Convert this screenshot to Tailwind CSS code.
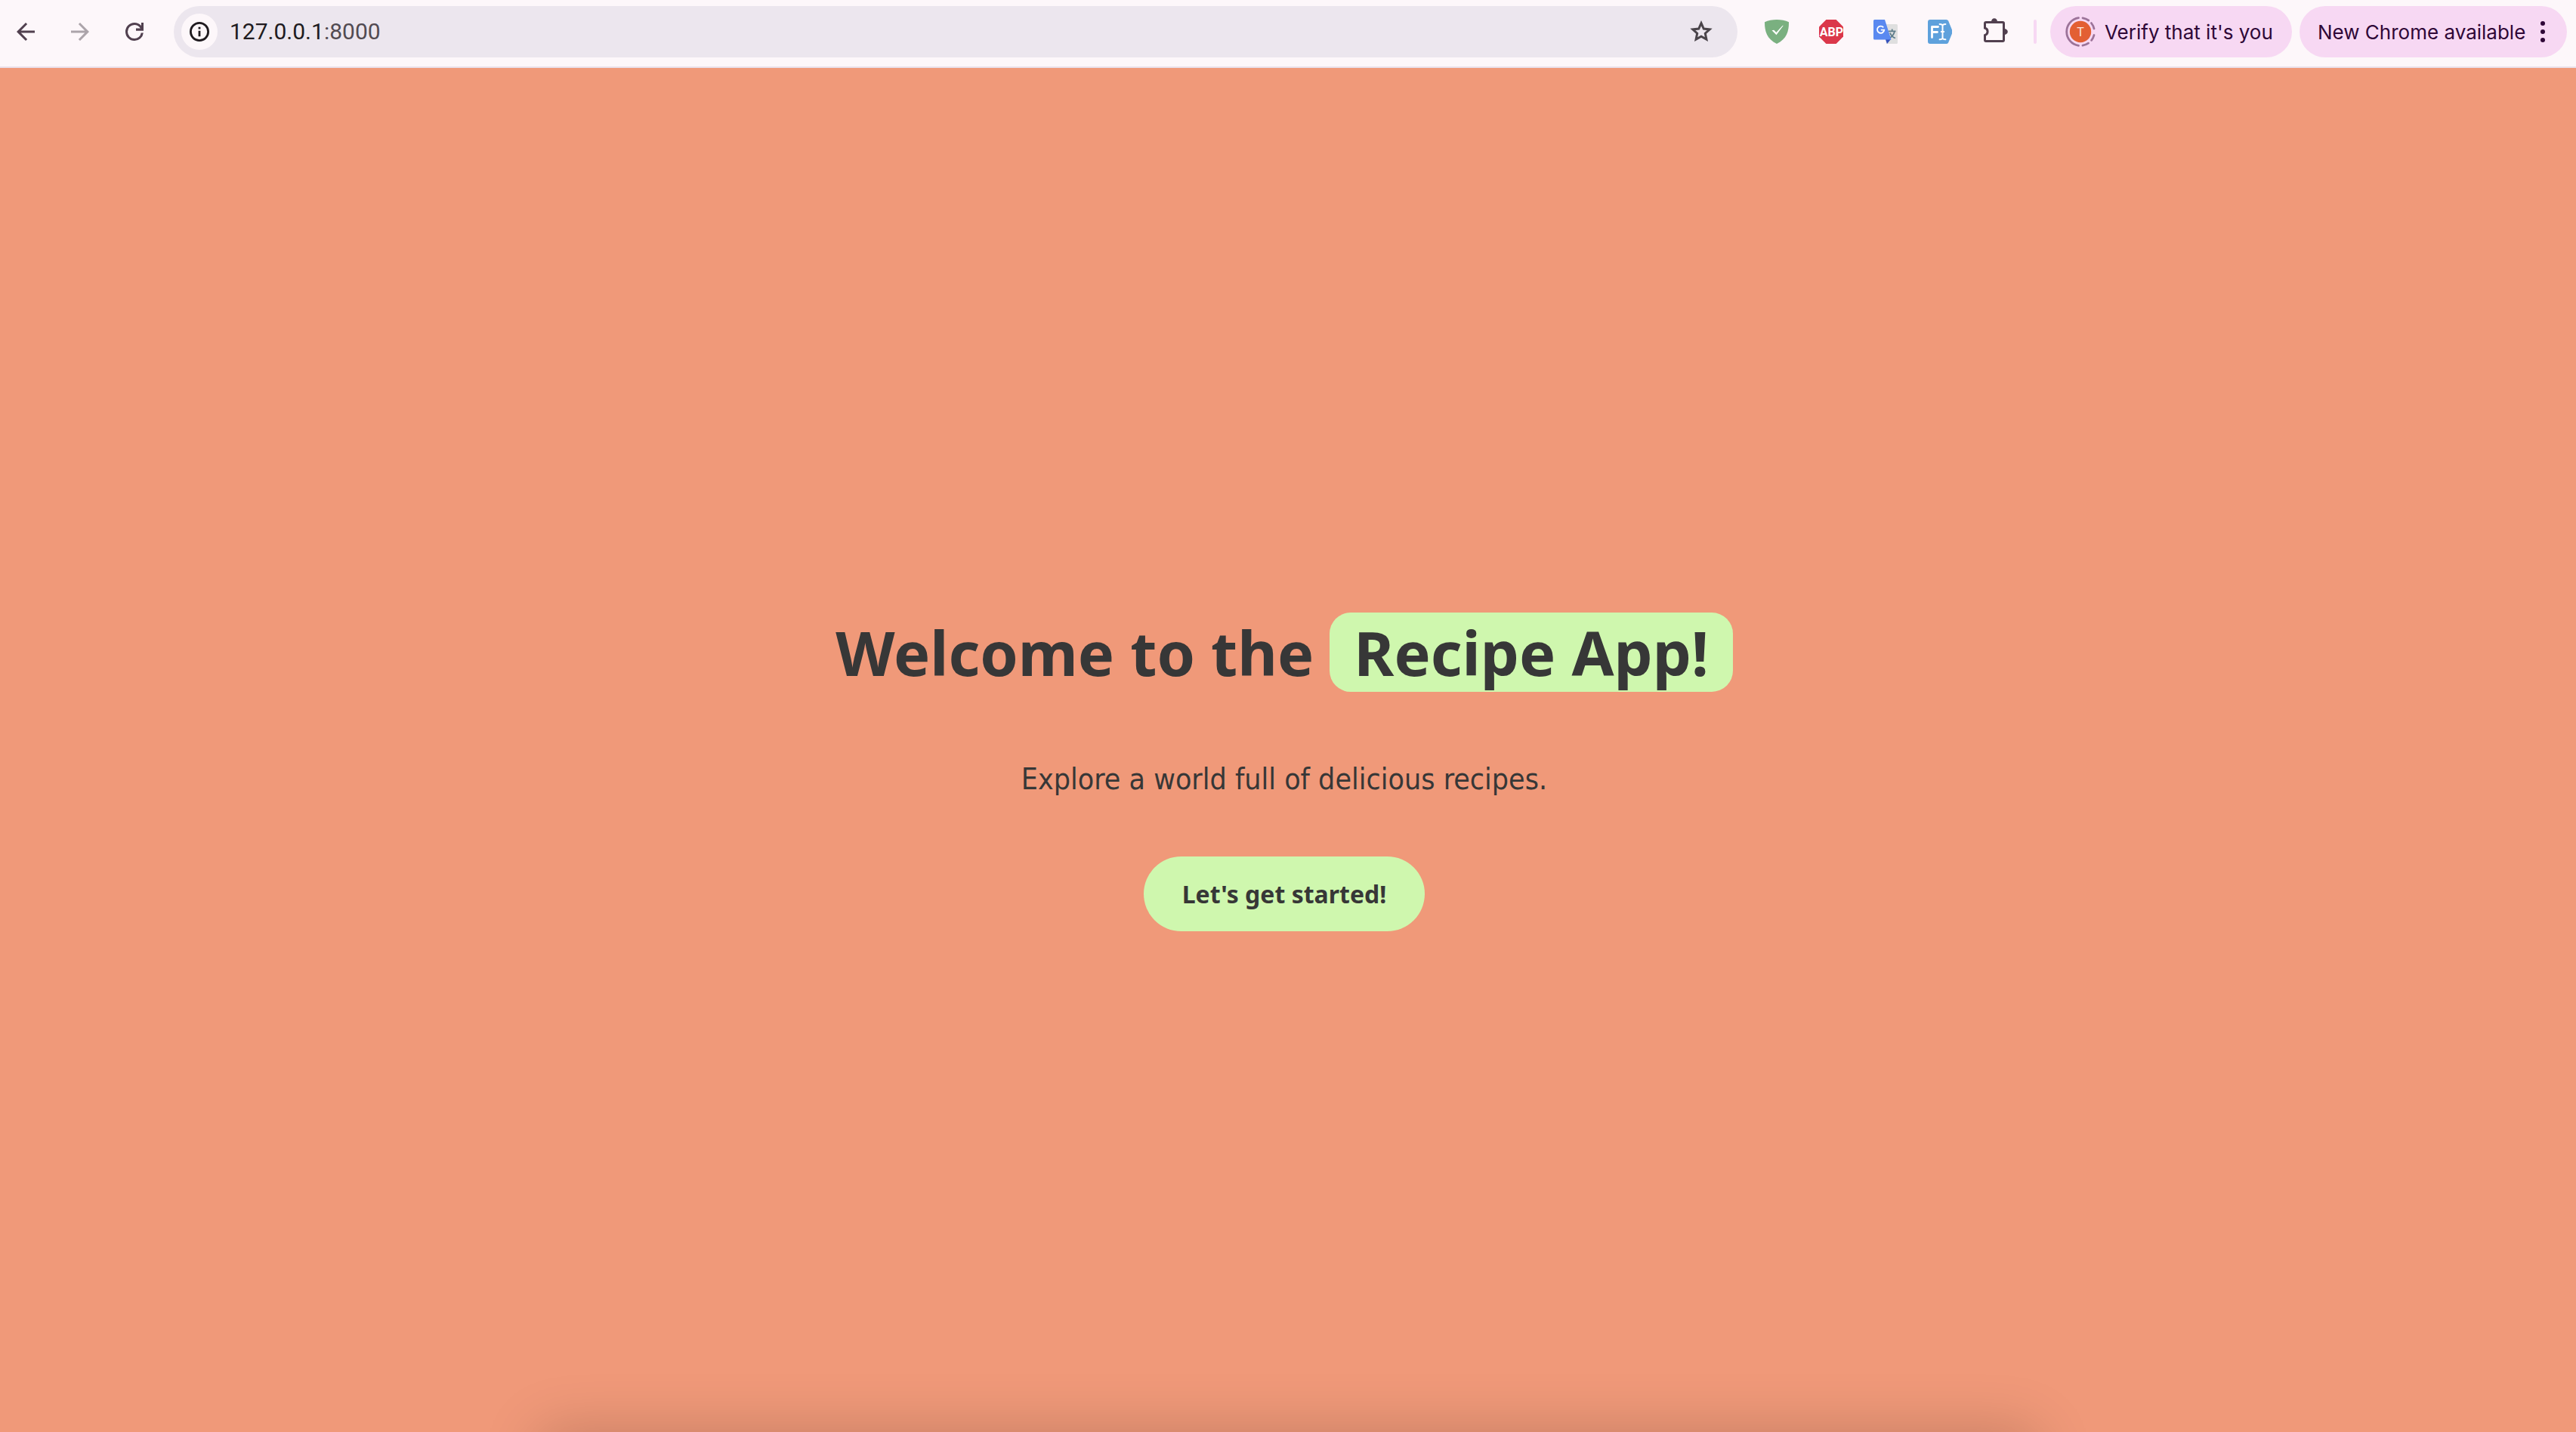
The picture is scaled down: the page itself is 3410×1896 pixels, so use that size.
<!DOCTYPE html>
<html lang="en">
<head>
<meta charset="utf-8">
<title>Recipe App</title>
<script src="https://cdn.jsdelivr.net/npm/@tailwindcss/browser@4"></script>
</head>
<body class="flex min-h-screen flex-col bg-[#f09979] font-['Noto_Sans',sans-serif] text-[#373737]">

<header class="relative flex h-[90px] shrink-0 items-center overflow-hidden border-b-2 border-[#eadfe9] bg-[#fdf7fa] pr-3 pb-1 pl-[14px] font-['Inter',sans-serif]">
  <div class="absolute -top-5 -right-[22px] size-7 rounded-bl-full bg-[#efdcef]"></div>

  <nav class="flex items-center gap-8 pr-8 text-[#51404f]" aria-label="Browser navigation">
    <button aria-label="Back"><svg class="size-10" viewBox="0 0 20 20" fill="currentColor"><path d="M6.88 10.75 11.06 14.94 10 16l-6-6 6-6 1.06 1.06L6.88 9.25H16v1.5z"/></svg></button>
    <button aria-label="Forward" class="text-[#aca4aa]"><svg class="size-10" viewBox="0 0 20 20" fill="currentColor"><path d="M13.12 10.75 8.94 14.94 10 16l6-6-6-6-1.06 1.06 4.18 4.19H4v1.5z"/></svg></button>
    <button aria-label="Reload"><svg class="size-10" viewBox="0 0 20 20" fill="currentColor"><path d="M10 16q-2.5 0-4.25-1.75T4 10t1.75-4.25T10 4q1.27 0 2.41.53A5.9 5.9 0 0 1 14.5 6.05V4H16v5.4h-5V7.75h2.9a4.6 4.6 0 0 0-1.76-1.71A4.4 4.4 0 0 0 10 5.5q-1.88 0-3.19 1.31T5.5 10t1.31 3.19T10 14.5q1.6 0 2.83-1.02a4.4 4.4 0 0 0 1.55-2.73h1.54q-.28 2.25-1.96 3.75T10 16z"/></svg></button>
  </nav>

  <div class="flex h-[68px] flex-1 items-center rounded-full bg-[#ece6ee] pr-7 pl-[10px]">
    <button aria-label="Site information" class="flex size-12 items-center justify-center rounded-full bg-[#fdf7fa]">
      <svg class="size-7" viewBox="0 0 28 28" fill="none" stroke="#1f1a1f" stroke-width="2.8"><circle cx="14" cy="14" r="11.6"/><path d="M14 12.8v7.4M14 7.8v2.6"/></svg>
    </button>
    <a href="http://127.0.0.1:8000" class="ml-4 flex-1 font-['Roboto',sans-serif] text-[30px] leading-9 text-[#201b20]">127.0.0.1<span class="text-[#524b52]">:8000</span></a>
    <button aria-label="Bookmark this tab"><svg class="size-10" viewBox="0 0 40 40" fill="none" stroke="#4a444a" stroke-width="3" stroke-miterlimit="8"><path d="M20 8.7 23.3 16 31.2 16.9 25.3 22.2 26.9 30 20 26.1 13.1 30 14.7 22.2 8.8 16.9 16.7 16z"/></svg></button>
  </div>

  <div class="flex items-center gap-10 px-9">
    <button aria-label="Ad blocker"><svg class="size-8" viewBox="0 0 32 32"><path d="M16 0C10.500 0 4.500 1 0 3.200 0 16 3 25.500 16 32 29 25.500 32 16 32 3.200 27.500 1 21.500 0 16 0z" fill="#7ab080"/><path d="m9.500 14.300 2.800-.6 3 3.200 8.300-8.900 1.200-.2-9.300 12.400z" fill="#fff"/></svg></button>
    <button aria-label="Adblock Plus"><svg class="size-8" viewBox="0 0 32 32"><path d="M9.400 0h13.200L32 9.400v13.200L22.600 32H9.400L0 22.600V9.400z" fill="#db374a"/><text x="16.500" y="22" text-anchor="middle" fill="#fff" class="font-['Roboto',sans-serif] text-[16px] font-bold">ABP</text></svg></button>
    <button aria-label="Translate"><svg class="size-8" viewBox="0 0 32 32"><path d="M12 6h18.500a1.500 1.500 0 0 1 1.500 1.500v23a1.500 1.500 0 0 1-1.500 1.500H17z" fill="#dfdfdf"/><path d="M20 15.300h9.500M24.700 12.500v2.800M28 15.500c-1 4-4 7.500-7 9M22 17.500c1 3 4 6 7 7" fill="none" stroke="#5f7d8b" stroke-width="1.800"/><path d="M16 26h7l-5 6z" fill="#3450bd"/><path d="M1.500 0H15l8.500 26.500h-22A1.500 1.500 0 0 1 0 25V1.500A1.500 1.500 0 0 1 1.500 0z" fill="#5a89f0"/><path d="M13.200 10.300a4.600 4.600 0 1 0 1 3.300H9.800" fill="none" stroke="#fff" stroke-width="1.900"/></svg></button>
    <button aria-label="Form filler"><svg class="size-8" viewBox="0 0 32 32"><path d="M3 0h21.500a3 3 0 0 1 2.600 1.500L32 13.500q1 2.500 0 5L27.100 30.500A3 3 0 0 1 24.500 32H3a3 3 0 0 1-3-3V3a3 3 0 0 1 3-3z" fill="#5ea1dc"/><path d="M5.500 23.500v-14H13.500M5.500 16.500h7" fill="none" stroke="#fff" stroke-width="2.800" stroke-linecap="round" stroke-linejoin="round"/><path d="M15.600 6q3.600 0 3.900 1.800Q19.800 6 23.400 6M19.500 7.500v17.500M15.600 26.200q3.600 0 3.900-1.800.3 1.800 3.900 1.800M17.800 16h3.400" fill="none" stroke="#fff" stroke-width="2" stroke-linecap="round"/></svg></button>
    <button aria-label="Extensions"><svg class="size-8 overflow-visible" viewBox="0 0 32 32"><path d="M5 3.500h22a1.500 1.500 0 0 1 1.500 1.500v22a1.500 1.500 0 0 1-1.500 1.500H5A1.500 1.500 0 0 1 3.500 27v-6.400a5 5 0 0 0 0-9.600V5A1.500 1.500 0 0 1 5 3.500z" fill="none" stroke="#51404f" stroke-width="3"/><path d="M12 3a4 4.800 0 0 1 8 0zM29 12a4.800 4 0 0 1 0 8z" fill="#51404f"/></svg></button>
  </div>

  <div class="mr-[18px] h-8 w-1 rounded-full bg-[#f7d8f3]"></div>

  <div class="flex gap-[10px] text-[26px] text-[#2f0737]">
    <button class="flex h-[68px] w-80 items-center gap-3 rounded-full bg-[#f7d8f3] pl-5 whitespace-nowrap">
      <svg class="size-10 shrink-0" viewBox="0 0 40 40"><circle cx="20" cy="20" r="14.200" fill="#e35f33"/><g fill="none" stroke="#9c7399" stroke-width="2.800" stroke-linecap="round"><path d="M17.500 1.700a18.500 18.500 0 0 0 0 36.600M23 1.800a18.500 18.500 0 0 1 7.800 3.200M34.400 8.500a18.500 18.500 0 0 1 3.600 7.500M38 24.500a18.500 18.500 0 0 1-3.400 6.800M30.600 35.200a18.500 18.500 0 0 1-7.600 3"/></g><text x="20" y="25.500" text-anchor="middle" fill="#fbe6dd" class="font-['Roboto',sans-serif] text-[16px]">T</text></svg>
      Verify that it's you
    </button>
    <button class="flex h-[68px] w-[354px] items-center justify-between rounded-full bg-[#f7d8f3] pr-[29px] pl-6 whitespace-nowrap">
      New Chrome available
      <svg class="h-7 w-[6px]" viewBox="0 0 6 28" fill="currentColor"><circle cx="3" cy="3" r="3"/><circle cx="3" cy="14" r="3"/><circle cx="3" cy="25" r="3"/></svg>
    </button>
  </div>
</header>

<main class="relative flex flex-1 flex-col items-center justify-center overflow-hidden pt-[58px] pr-[10px] text-center">
  <h1 class="text-[81px] leading-[105px] font-bold">Welcome to the <span class="inline-block rounded-[28px] bg-[#cff7ae] px-8">Recipe App!</span></h1>
  <p class="mt-[92px] font-['DejaVu_Sans_Condensed',sans-serif] text-[39px] leading-[48px]">Explore a world full of delicious recipes.</p>
  <a href="#recipes" class="mt-[78px] rounded-full bg-[#cff7ae] px-[51px] text-[32px] leading-[99px] font-bold">Let's get started!</a>
  <div class="absolute top-full right-[21%] left-[21%] h-24 shadow-[0_0_80px_rgba(0,0,0,0.19)]"></div>
</main>
</body>
</html>
